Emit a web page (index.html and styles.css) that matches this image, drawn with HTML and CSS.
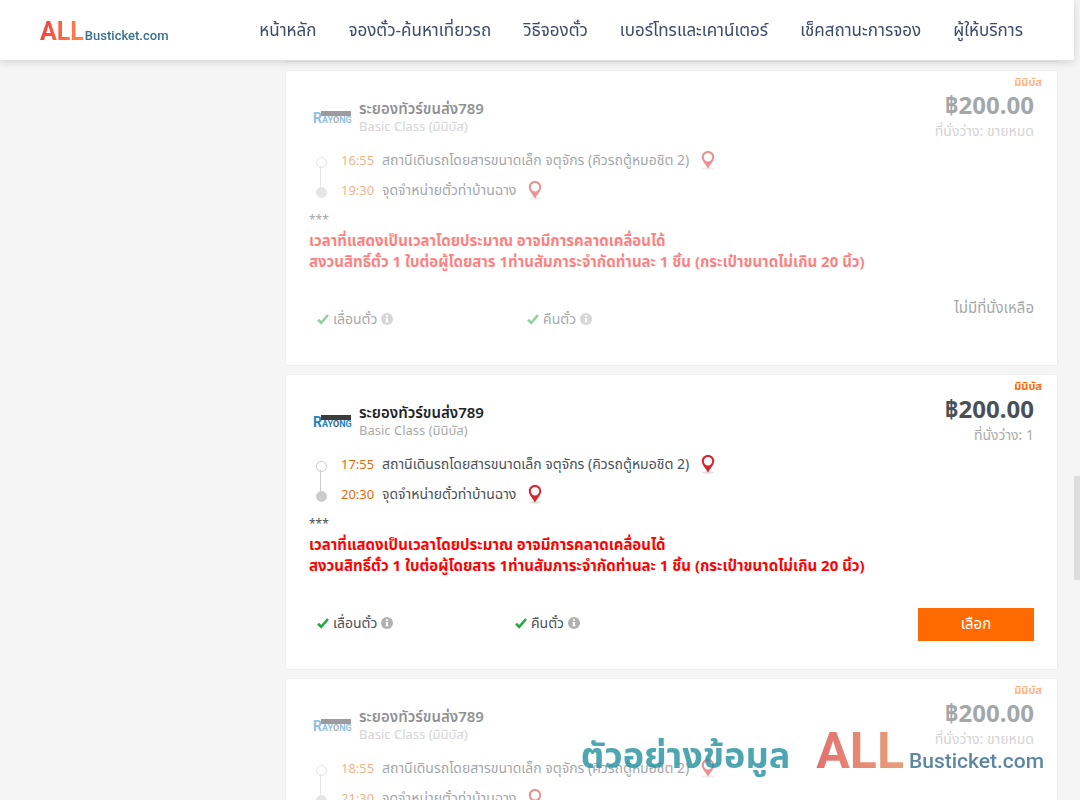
FILE: index.html
```
<!DOCTYPE html>
<html lang="th">
<head>
    <meta charset="utf-8">
    <meta name="viewport" content="width=device-width, initial-scale=1">
    <title>ALL Busticket.com</title>
    <link rel="stylesheet" href="styles.css">
</head>
<body>

    <!-- shared icons -->
    <svg class="hide" aria-hidden="true">
        <symbol id="icon-pin" viewBox="0 0 14 19">
            <ellipse cx="7" cy="17.500" rx="6" ry="1.200" fill="#dddddd"/>
            <path fill="#d9262c" fill-rule="evenodd" d="M7 0C3.400 0 .8 2.600 .8 6c0 4 3.700 7 6.200 11.500 2.500-4.500 6.200-7.500 6.200-11.500C13.200 2.600 10.600 0 7 0zm0 2a4.200 4.200 0 1 1 0 8.400A4.200 4.200 0 0 1 7 2z"/>
        </symbol>
        <symbol id="icon-check" viewBox="0 0 12 12">
            <path fill="none" stroke="#28a745" stroke-width="2.600" d="M1 6.800l3.200 3L11 2"/>
        </symbol>
        <symbol id="icon-info" viewBox="0 0 12 12">
            <circle cx="6" cy="6" r="6" fill="#b1b1b1"/>
            <path fill="#fff" d="M5 2.200h2v1.800H5zM4.500 5H7v3.300h.6v1H4.400v-1H5V6h-.5z"/>
        </symbol>
    </svg>

    <header class="navbar">
        <a class="brand" href="#"><span class="brand-all">ALL</span><span class="brand-name">Busticket.com</span></a>
        <nav class="menu">
            <a href="#">หน้าหลัก</a>
            <a href="#">จองตั๋ว-ค้นหาเที่ยวรถ</a>
            <a href="#">วิธีจองตั๋ว</a>
            <a href="#">เบอร์โทรและเคาน์เตอร์</a>
            <a href="#">เช็คสถานะการจอง</a>
            <a href="#">ผู้ให้บริการ</a>
        </nav>
    </header>

    <main class="results">
        <article class="trip">
            <div class="trip-body sold-out">
                <div class="trip-top">
                    <div class="operator">
                        <svg class="operator-logo" viewBox="0 0 38 14">
                            <rect x="8" y="1" width="30" height="5" fill="#3c3c3c"/>
                            <text x="0" y="13" font-size="14">R</text>
                            <text x="9" y="13" font-size="9">AY<tspan fill="#555555">O</tspan>NG</text>
                        </svg>
                        <div>
                            <h2>ระยองทัวร์ขนส่ง789</h2>
                            <p>Basic Class (มินิบัส)</p>
                        </div>
                    </div>
                    <div class="fare">
                        <span class="bus-type">มินิบัส</span>
                        <span class="price">฿200.00</span>
                        <span class="seats">ที่นั่งว่าง: ขายหมด</span>
                    </div>
                </div>
                <ul class="route">
                    <li><time>16:55</time><span>สถานีเดินรถโดยสารขนาดเล็ก จตุจักร (คิวรถตู้หมอชิต 2)</span><svg class="pin"><use href="#icon-pin"/></svg></li>
                    <li><time>19:30</time><span>จุดจำหน่ายตั๋วท่าบ้านฉาง</span><svg class="pin"><use href="#icon-pin"/></svg></li>
                </ul>
                <div class="note">
                    <p>***</p>
                    <p class="warning">เวลาที่แสดงเป็นเวลาโดยประมาณ อาจมีการคลาดเคลื่อนได้</p>
                    <p class="warning">สงวนสิทธิ์ตั๋ว 1 ใบต่อผู้โดยสาร 1ท่านสัมภาระจำกัดท่านละ 1 ชิ้น (กระเป๋าขนาดไม่เกิน 20 นิ้ว)</p>
                </div>
                <div class="trip-bottom">
                    <div class="options">
                        <span class="option"><svg><use href="#icon-check"/></svg>เลื่อนตั๋ว<svg><use href="#icon-info"/></svg></span>
                        <span class="option"><svg><use href="#icon-check"/></svg>คืนตั๋ว<svg><use href="#icon-info"/></svg></span>
                    </div>
                    <span class="no-seat">ไม่มีที่นั่งเหลือ</span>
                </div>
            </div>
        </article>

        <article class="trip">
            <div class="trip-body">
                <div class="trip-top">
                    <div class="operator">
                        <svg class="operator-logo" viewBox="0 0 38 14">
                            <rect x="8" y="1" width="30" height="5" fill="#3c3c3c"/>
                            <text x="0" y="13" font-size="14">R</text>
                            <text x="9" y="13" font-size="9">AY<tspan fill="#555555">O</tspan>NG</text>
                        </svg>
                        <div>
                            <h2>ระยองทัวร์ขนส่ง789</h2>
                            <p>Basic Class (มินิบัส)</p>
                        </div>
                    </div>
                    <div class="fare">
                        <span class="bus-type">มินิบัส</span>
                        <span class="price">฿200.00</span>
                        <span class="seats">ที่นั่งว่าง: 1</span>
                    </div>
                </div>
                <ul class="route">
                    <li><time>17:55</time><span>สถานีเดินรถโดยสารขนาดเล็ก จตุจักร (คิวรถตู้หมอชิต 2)</span><svg class="pin"><use href="#icon-pin"/></svg></li>
                    <li><time>20:30</time><span>จุดจำหน่ายตั๋วท่าบ้านฉาง</span><svg class="pin"><use href="#icon-pin"/></svg></li>
                </ul>
                <div class="note">
                    <p>***</p>
                    <p class="warning">เวลาที่แสดงเป็นเวลาโดยประมาณ อาจมีการคลาดเคลื่อนได้</p>
                    <p class="warning">สงวนสิทธิ์ตั๋ว 1 ใบต่อผู้โดยสาร 1ท่านสัมภาระจำกัดท่านละ 1 ชิ้น (กระเป๋าขนาดไม่เกิน 20 นิ้ว)</p>
                </div>
                <div class="trip-bottom">
                    <div class="options">
                        <span class="option"><svg><use href="#icon-check"/></svg>เลื่อนตั๋ว<svg><use href="#icon-info"/></svg></span>
                        <span class="option"><svg><use href="#icon-check"/></svg>คืนตั๋ว<svg><use href="#icon-info"/></svg></span>
                    </div>
                    <button type="button" class="select-btn">เลือก</button>
                </div>
            </div>
        </article>

        <article class="trip">
            <div class="trip-body sold-out">
                <div class="trip-top">
                    <div class="operator">
                        <svg class="operator-logo" viewBox="0 0 38 14">
                            <rect x="8" y="1" width="30" height="5" fill="#3c3c3c"/>
                            <text x="0" y="13" font-size="14">R</text>
                            <text x="9" y="13" font-size="9">AY<tspan fill="#555555">O</tspan>NG</text>
                        </svg>
                        <div>
                            <h2>ระยองทัวร์ขนส่ง789</h2>
                            <p>Basic Class (มินิบัส)</p>
                        </div>
                    </div>
                    <div class="fare">
                        <span class="bus-type">มินิบัส</span>
                        <span class="price">฿200.00</span>
                        <span class="seats">ที่นั่งว่าง: ขายหมด</span>
                    </div>
                </div>
                <ul class="route">
                    <li><time>18:55</time><span>สถานีเดินรถโดยสารขนาดเล็ก จตุจักร (คิวรถตู้หมอชิต 2)</span><svg class="pin"><use href="#icon-pin"/></svg></li>
                    <li><time>21:30</time><span>จุดจำหน่ายตั๋วท่าบ้านฉาง</span><svg class="pin"><use href="#icon-pin"/></svg></li>
                </ul>
            </div>
        </article>
    </main>

    <div class="watermark">
        <span class="watermark-text">ตัวอย่างข้อมูล</span>
        <span class="watermark-all">ALL</span>
        <span class="watermark-name">Busticket.com</span>
    </div>

    <div class="scrollbar"><div class="scrollbar-thumb"></div></div>

</body>
</html>
```
FILE: styles.css
```
* {
    box-sizing: border-box;
}

body {
    margin: 0;
    height: 100vh;
    overflow: hidden;
    background-color: #f5f5f5;
    color: #495057;
    font-family: "Noto Sans", "Noto Sans Thai", "Open Sans", sans-serif;
    font-size: 14px;
    line-height: 20px;
}

h2, p, ul {
    margin: 0;
    padding: 0;
}

.hide {
    position: absolute;
    width: 0;
    height: 0;
}

/* navbar */
.navbar {
    position: fixed;
    top: 0;
    left: 0;
    right: 6px;
    z-index: 10;
    height: 60px;
    padding: 0 51px 0 40px;
    display: flex;
    align-items: center;
    justify-content: space-between;
    background-color: white;
    box-shadow: 0 2px 8px rgba(0, 0, 0, 0.15);
}

.brand {
    display: flex;
    align-items: baseline;
    gap: 1px;
    padding-top: 8px;
    font-family: Roboto, sans-serif;
    font-weight: 700;
    line-height: 26px;
    text-decoration: none;
}

.brand-all {
    font-size: 25px;
    background: linear-gradient(90deg, #f5413c, #ff8a4c);
    -webkit-background-clip: text;
    background-clip: text;
    color: transparent;
}

.brand-name {
    font-size: 13px;
    font-weight: 500;
    color: #38708f;
}

.menu {
    display: flex;
    gap: 32px;
}

.menu a {
    color: #3b4a6b;
    font-size: 17px;
    text-decoration: none;
    white-space: nowrap;
}

/* trip list */
.results {
    margin: 61px 22px 0 285px;
    padding-top: 8px;
    border-top: 1px solid #e9e9e9;
    display: flex;
    flex-direction: column;
    gap: 8px;
}

.trip {
    min-height: 296px;
    background-color: white;
    border: 1px solid #eeeeee;
}

.trip-body {
    padding: 4px 23px 24px;
}

.sold-out {
    opacity: 0.5;
}

.trip-top {
    display: flex;
    align-items: flex-start;
    justify-content: space-between;
}

.operator {
    display: flex;
    align-items: center;
    gap: 8px;
    padding: 24px 0 0 4px;
    line-height: 18px;
}

.operator-logo {
    width: 38px;
    height: 14px;
    overflow: visible;
    fill: #2383c4;
    font-family: Roboto, sans-serif;
    font-weight: 700;
}

.operator h2 {
    color: #212529;
    font-size: 15px;
    font-weight: 600;
    line-height: 18px;
}

.operator p {
    font-size: 13px;
}

.operator p,
.seats {
    color: #aaaaaa;
}

.fare {
    display: flex;
    flex-direction: column;
    align-items: flex-end;
}

.bus-type {
    margin-right: -8px;
    color: #ff6a00;
    font-size: 11px;
    font-weight: 700;
    line-height: 14px;
}

.price {
    font-size: 24px;
    font-weight: 700;
    line-height: 32px;
}

.route {
    list-style: none;
    margin: 4px 0 0 7px;
}

.route li {
    position: relative;
    display: flex;
    align-items: center;
    gap: 8px;
    height: 30px;
    padding-left: 25px;
}

.route li::before {
    content: "";
    position: absolute;
    left: 0;
    top: 12px;
    width: 9px;
    height: 9px;
    border: 1px solid #cccccc;
    border-radius: 50%;
}

.route li:last-child::before {
    background-color: #cccccc;
}

.route li:first-child::after {
    content: "";
    position: absolute;
    left: 4px;
    top: 21px;
    width: 1px;
    height: 21px;
    background-color: #cccccc;
}

.route time {
    width: 33px;
    color: #e8690b;
    font-size: 13px;
}

.pin {
    width: 14px;
    height: 19px;
    margin-left: 4px;
}

.note {
    margin-top: 4px;
    font-size: 12px;
    line-height: 21px;
}

.warning {
    color: #ff0000;
    font-size: 15px;
    font-weight: 700;
}

.trip-bottom {
    display: flex;
    align-items: flex-start;
    gap: 15px;
    height: 44px;
    margin-top: 25px;
}

.options {
    flex: 1;
    display: grid;
    grid-template-columns: repeat(3, 1fr);
    padding-top: 12px;
}

.option {
    display: flex;
    align-items: center;
    gap: 4px;
    padding-left: 8px;
}

.option svg {
    width: 12px;
    height: 12px;
}

.no-seat {
    font-size: 15px;
}

.select-btn {
    width: 116px;
    height: 33px;
    margin-top: 7px;
    border: none;
    background-color: #ff6a00;
    color: white;
    font-family: inherit;
    font-size: 15px;
    cursor: pointer;
}

/* watermark */
.watermark {
    position: fixed;
    right: 36px;
    bottom: 15px;
    z-index: 5;
    display: flex;
    align-items: baseline;
    font-weight: 700;
    line-height: 48px;
    opacity: 0.8;
}

.watermark-text {
    margin-right: 26px;
    color: #22909f;
    font-size: 36px;
}

.watermark-all {
    margin-right: 5px;
    font-family: Roboto, sans-serif;
    font-size: 50px;
    background: linear-gradient(90deg, #dd4f4c, #e08a58);
    -webkit-background-clip: text;
    background-clip: text;
    color: transparent;
}

.watermark-name {
    color: #35688a;
    font-family: Roboto, sans-serif;
    font-size: 21px;
    font-weight: 500;
}

.scrollbar {
    position: fixed;
    top: 0;
    right: 0;
    bottom: 0;
    width: 6px;
    background-color: #f5f5f5;
}

.scrollbar-thumb {
    height: 13%;
    margin-top: 476px;
    background-color: #dddddd;
}
```
